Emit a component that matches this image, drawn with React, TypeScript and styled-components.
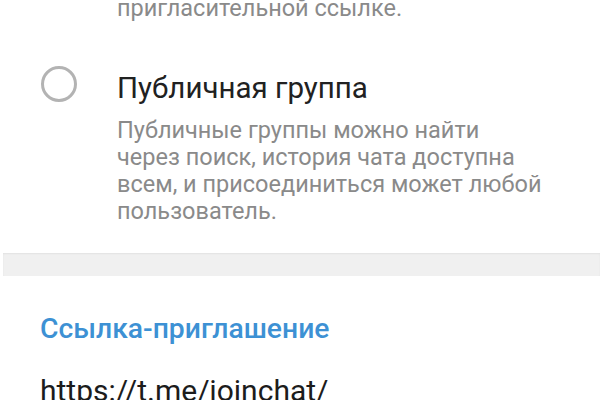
import styled, { createGlobalStyle } from "styled-components";

const Global = createGlobalStyle`
  html, body {
    margin: 0;
    padding: 0;
    background: #ffffff;
    overflow: hidden;
  }
  body {
    font-family: Roboto, "Noto Sans", "DejaVu Sans", sans-serif;
  }
`;

const Screen = styled.div`
  width: 600px;
  height: 400px;
  overflow: hidden;
  background: #ffffff;
`;

// the list is scrolled a little past the previous option
const Scroll = styled.div`
  margin-top: -6px;
`;

const Tail = styled.div`
  padding-left: 117px;
  font-size: 23.5px;
  line-height: 28px;
  color: #8a8a8a;
`;

const Option = styled.div`
  display: flex;
  align-items: flex-start;
  padding: 44px 20px 0 41px;
`;

const Radio = styled.div<{ $checked?: boolean }>`
  flex: none;
  width: 36px;
  height: 36px;
  border-radius: 50%;
  border: 3px solid ${(p) => (p.$checked ? "#4a95d6" : "#b3b3b3")};
  box-sizing: border-box;
`;

const OptionBody = styled.div`
  margin-left: 40px;
  padding-top: 4px;
  display: flex;
  flex-direction: column;
`;

const OptionTitle = styled.div`
  font-size: 29.5px;
  line-height: 36px;
  color: #212121;
`;

const OptionText = styled.div`
  margin-top: 11px;
  font-size: 23.5px;
  line-height: 27px;
  color: #8a8a8a;
  white-space: nowrap;
`;

const Divider = styled.div`
  margin: 28px 0 0 3px;
  height: 23px;
  background: #f0f0f0;
  box-shadow: inset 0 1px 2px rgba(0, 0, 0, 0.06);
`;

const Section = styled.div`
  padding: 36px 20px 0 40px;
`;

const SectionHeader = styled.div`
  font-size: 28.3px;
  font-weight: 500;
  line-height: 34px;
  color: #3d91d4;
`;

const LinkText = styled.div`
  margin-top: 27px;
  font-size: 30px;
  line-height: 36px;
  color: #1c1c1c;
`;

export default function App() {
  return (
    <Screen>
      <Global />
      <Scroll>
        <Tail>пригласительной ссылке.</Tail>
        <Option>
          <Radio />
          <OptionBody>
            <OptionTitle>Публичная группа</OptionTitle>
            <OptionText>
              Публичные группы можно найти
              <br />
              через поиск, история чата доступна
              <br />
              всем, и присоединиться может любой
              <br />
              пользователь.
            </OptionText>
          </OptionBody>
        </Option>
        <Divider />
        <Section>
          <SectionHeader>Ссылка-приглашение</SectionHeader>
          <LinkText>https://t.me/joinchat/</LinkText>
        </Section>
      </Scroll>
    </Screen>
  );
}
